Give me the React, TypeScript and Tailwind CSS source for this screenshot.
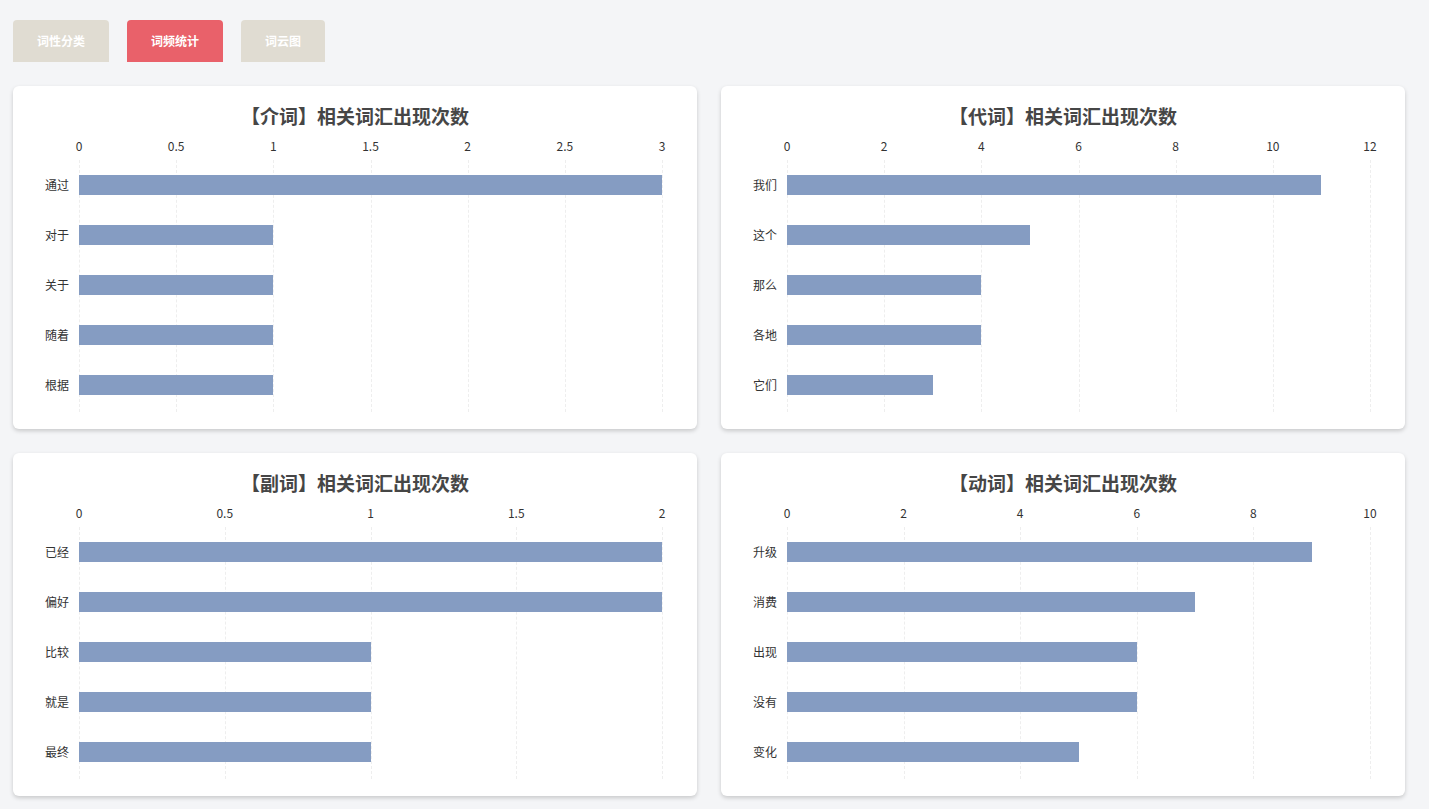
import React from "react";

type Chart = { title: string; max: number; ticks: string[]; data: [string, number][] };

const charts: Chart[] = [
  { title: "【介词】相关词汇出现次数", max: 3, ticks: ["0", "0.5", "1", "1.5", "2", "2.5", "3"], data: [["通过", 3], ["对于", 1], ["关于", 1], ["随着", 1], ["根据", 1]] },
  { title: "【代词】相关词汇出现次数", max: 12, ticks: ["0", "2", "4", "6", "8", "10", "12"], data: [["我们", 11], ["这个", 5], ["那么", 4], ["各地", 4], ["它们", 3]] },
  { title: "【副词】相关词汇出现次数", max: 2, ticks: ["0", "0.5", "1", "1.5", "2"], data: [["已经", 2], ["偏好", 2], ["比较", 1], ["就是", 1], ["最终", 1]] },
  { title: "【动词】相关词汇出现次数", max: 10, ticks: ["0", "2", "4", "6", "8", "10"], data: [["升级", 9], ["消费", 7], ["出现", 6], ["没有", 6], ["变化", 5]] },
];

function ChartCard({ c }: { c: Chart }) {
  const n = c.ticks.length - 1;
  return (
    <div className="bg-white rounded-md shadow-[0_2px_4px_rgba(0,0,0,0.18)] h-[343px] pt-[16px]">
      <div className="text-center text-[19px] font-bold text-[#464646] leading-[28px]">{c.title}</div>
      <div className="pl-[66px] pr-[35px] mt-[8px]">
        <div className="relative h-[16px] text-[12px] text-[#333]">
          {c.ticks.map((t, i) => (
            <span key={i} className="absolute top-0 -translate-x-1/2 leading-[16px]" style={{ left: `${(i / n) * 100}%` }}>{t}</span>
          ))}
        </div>
        <div className="relative mt-[6px] h-[252px]">
          {c.ticks.map((_, i) => (
            <div key={i} className="absolute top-0 bottom-0 border-l border-dashed border-[#eeeeee]" style={{ left: `${(i / n) * 100}%` }} />
          ))}
          <div className="flex flex-col">
            {c.data.map(([label, v]) => (
              <div key={label} className="relative h-[50px] flex items-center">
                <span className="absolute -left-[34px] text-[12px] text-[#333]">{label}</span>
                <div className="h-[20px] bg-[#859cc2] relative" style={{ width: `${(v / c.max) * 100}%` }} />
              </div>
            ))}
          </div>
        </div>
      </div>
    </div>
  );
}

export default function App() {
  return (
    <div className="min-h-[809px] bg-[#f4f5f7] px-[13px] pt-[20px] pb-[13px]" style={{ fontFamily: '"Noto Sans CJK SC", "Noto Sans", sans-serif' }}>
      <div className="flex gap-[18px]">
        <button className="w-[96px] h-[42px] rounded-t-[4px] bg-[#e0dcd2] text-white text-[12px] font-bold">词性分类</button>
        <button className="w-[96px] h-[42px] rounded-t-[4px] bg-[#e9616a] text-white text-[12px] font-bold">词频统计</button>
        <button className="w-[84px] h-[42px] rounded-t-[4px] bg-[#e0dcd2] text-white text-[12px] font-bold">词云图</button>
      </div>
      <div className="grid grid-cols-[684px_684px] gap-x-[24px] gap-y-[24px] mt-[24px]">
        {charts.map((c) => <ChartCard key={c.title} c={c} />)}
      </div>
    </div>
  );
}
